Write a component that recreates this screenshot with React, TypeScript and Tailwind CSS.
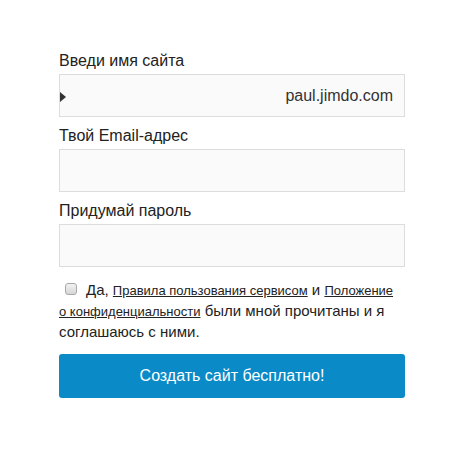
export default function App() {
  const font = { fontFamily: '"Liberation Sans", Arial, sans-serif' };
  return (
    <div className="min-h-[449px] w-[460px] bg-white" style={font}>
      <form className="ml-[59px] w-[346px] pt-[51px]">
        <label className="block text-[16px] leading-[20px] text-[#222] mb-[3px]">Введи имя сайта</label>
        <div className="relative flex h-[43px] items-center justify-end border border-[#dcdcdc] bg-[#fafafa] pr-[11px]">
          <span className="absolute left-0 top-[17px] h-0 w-0 border-y-[5px] border-l-[6px] border-y-transparent border-l-[#333]" />
          <span className="text-[16px] text-[#333]">paul.jimdo.com</span>
        </div>

        <label className="mt-[9px] block text-[16px] leading-[20px] text-[#222] mb-[3px]">Твой Email-адрес</label>
        <div className="h-[43px] border border-[#dcdcdc] bg-[#fafafa]" />

        <label className="mt-[9px] block text-[16px] leading-[20px] text-[#222] mb-[3px]">Придумай пароль</label>
        <div className="h-[43px] border border-[#dcdcdc] bg-[#fafafa]" />

        <p className="mt-[13px] pr-[4px] text-[15px] leading-[20px] text-[#222]">
          <span className="ml-[6px] mr-[9px] inline-block h-[12px] w-[12px] rounded-[3px] border border-[#a8a8a8] bg-gradient-to-b from-[#f2f2f2] to-[#d6d6d6] align-[0px]" />
          Да, <a className="text-[13px] underline">Правила пользования сервисом</a> и{" "}
          <a className="text-[13px] underline">Положение о конфиденциальности</a> были мной прочитаны и я соглашаюсь с ними.
        </p>

        <button
          type="button"
          className="mt-[12px] h-[44px] w-full rounded-[3px] bg-[#0a8ac6] text-[16px] text-white"
        >
          Создать сайт бесплатно!
        </button>
      </form>
    </div>
  );
}
